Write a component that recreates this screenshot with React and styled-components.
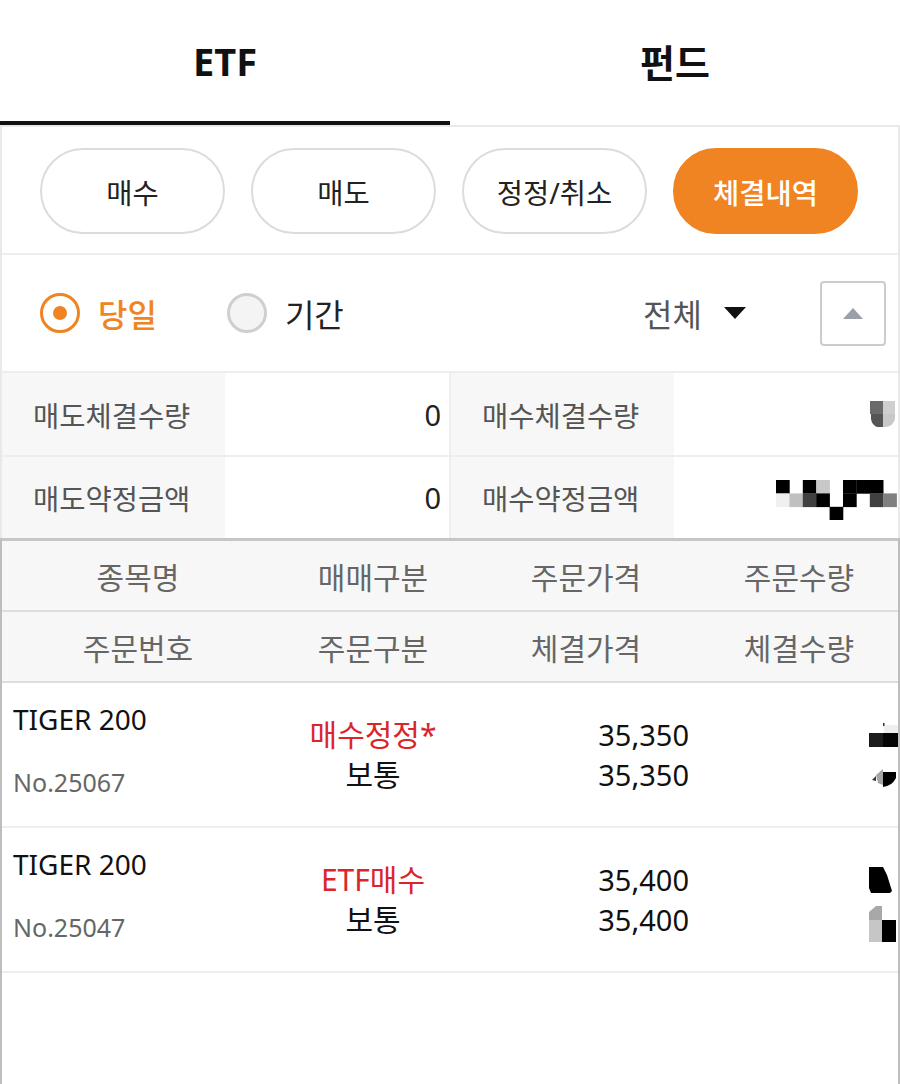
import React from 'react';
import styled, { createGlobalStyle } from 'styled-components';

const ORANGE = '#F08422';
const RED = '#D9262B';

const GlobalStyle = createGlobalStyle`
  html, body {
    margin: 0;
    padding: 0;
    background: #fff;
  }
  body {
    font-family: "Noto Sans", "Noto Sans CJK KR", sans-serif;
    color: #111;
  }
  * {
    box-sizing: border-box;
  }
`;

const Page = styled.div`
  width: 900px;
  min-height: 1084px;
  display: flex;
  flex-direction: column;
  background: #fff;
`;

const TabBar = styled.div`
  display: flex;
`;

const Tab = styled.div`
  flex: 1;
  height: 125px;
  display: flex;
  align-items: center;
  justify-content: center;
  font-size: 38px;
  font-weight: 700;
  color: #111;
  border-bottom: 4px solid ${p => (p.$active ? '#111' : 'transparent')};
`;

const Panel = styled.section`
  border: 2px solid #e9e9e9;
  border-bottom: none;
`;

const ButtonRow = styled.div`
  display: flex;
  gap: 26px;
  padding: 21px 38px 19px;
  border-bottom: 2px solid #eee;
`;

const Pill = styled.button`
  width: 185px;
  height: 86px;
  border-radius: 43px;
  border: 2px solid ${p => (p.$active ? ORANGE : '#dcdcdc')};
  background: ${p => (p.$active ? ORANGE : '#fff')};
  color: ${p => (p.$active ? '#fff' : '#222')};
  font-family: inherit;
  font-size: 28.5px;
  font-weight: ${p => (p.$active ? 500 : 400)};
  padding: 0;
`;

const FilterRow = styled.div`
  height: 118px;
  display: flex;
  align-items: center;
  padding: 0 12px 0 38px;
  border-bottom: 2px solid #eee;
`;

const Radio = styled.label`
  display: flex;
  align-items: center;
  gap: 18px;
  margin-right: 70px;
  font-size: 32px;
  font-weight: ${p => (p.$checked ? 500 : 400)};
  color: ${p => (p.$checked ? ORANGE : '#222')};
`;

const RadioMark = styled.span`
  width: 40px;
  height: 40px;
  border-radius: 50%;
  border: 3px solid ${p => (p.$checked ? ORANGE : '#cfcfcf')};
  background: ${p => (p.$checked ? '#fff' : '#f4f4f4')};
  display: flex;
  align-items: center;
  justify-content: center;

  &::after {
    content: '';
    display: ${p => (p.$checked ? 'block' : 'none')};
    width: 14px;
    height: 14px;
    border-radius: 50%;
    background: ${ORANGE};
  }
`;

const Spacer = styled.div`
  flex: 1;
`;

const Select = styled.div`
  display: flex;
  align-items: center;
  gap: 22px;
  font-size: 32px;
  color: #555;
  margin-right: 74px;
`;

const CaretDown = styled.span`
  width: 0;
  height: 0;
  border-left: 11px solid transparent;
  border-right: 11px solid transparent;
  border-top: 12px solid #111;
`;

const ToggleBox = styled.div`
  width: 66px;
  height: 65px;
  border: 2px solid #c9cdd2;
  border-radius: 4px;
  display: flex;
  align-items: center;
  justify-content: center;
`;

const CaretUp = styled.span`
  width: 0;
  height: 0;
  border-left: 10px solid transparent;
  border-right: 10px solid transparent;
  border-bottom: 11px solid #9aa0a8;
`;

const Summary = styled.div`
  display: grid;
  grid-template-columns: 223px 224px 225px 224px;
`;

const SumLabel = styled.div`
  height: ${p => (p.$last ? 81 : 84)}px;
  display: flex;
  align-items: center;
  padding-left: 31px;
  background: #f7f7f7;
  font-size: 28.5px;
  color: #555;
  border-bottom: ${p => (p.$last ? 'none' : '2px solid #eee')};
  border-left: ${p => (p.$divider ? '2px solid #eee' : 'none')};
`;

const SumValue = styled.div`
  height: ${p => (p.$last ? 81 : 84)}px;
  display: flex;
  align-items: center;
  justify-content: flex-end;
  padding-right: ${p => (p.$flush ? 0 : 8)}px;
  font-size: 29px;
  color: #222;
  border-bottom: ${p => (p.$last ? 'none' : '2px solid #eee')};
`;

const Table = styled.div`
  flex: 1;
  border-left: 2px solid #bdbdbd;
  border-right: 2px solid #bdbdbd;
  border-top: 3px solid #c6c6c6;
`;

const HeadRow = styled.div`
  display: grid;
  grid-template-columns: 272px 198px 228px 198px;
  height: 71px;
  background: #f7f7f7;
  border-bottom: 2px solid #dedede;
`;

const HeadCell = styled.div`
  display: flex;
  align-items: center;
  justify-content: center;
  font-size: 30px;
  color: #666;
`;

const DataRow = styled.div`
  display: grid;
  grid-template-columns: 272px 198px 228px 198px;
  height: 145px;
  border-bottom: 2px solid #eee;
`;

const NameCell = styled.div`
  display: flex;
  flex-direction: column;
  gap: 27px;
  padding: 18px 0 0 11px;
`;

const Name = styled.div`
  font-size: 28px;
  line-height: 36px;
  color: #111;
`;

const OrderNo = styled.div`
  font-size: 25px;
  line-height: 36px;
  color: #666;
`;

const StackCell = styled.div`
  display: flex;
  flex-direction: column;
  justify-content: center;
  align-items: ${p => (p.$right ? 'flex-end' : 'center')};
  padding-right: ${p => (p.$right ? 11 : 0)}px;
  padding-bottom: 2px;
  font-size: ${p => (p.$right ? 29 : 30)}px;
  line-height: 40px;
  color: #111;
`;

const Kind = styled.span`
  color: ${p => (p.$red ? RED : '#111')};
`;

const QtyCell = styled.div`
  display: flex;
  justify-content: flex-end;
`;

const Mosaic = ({ w, h, children }) => (
  <svg width={w} height={h} viewBox={`0 0 ${w} ${h}`} style={{ display: 'block' }}>
    {children}
  </svg>
);

const S = 13.4;
const bigCells = [
  [0, 0, '#000'], [2, 0, '#000'], [3, 0, '#c8c8c8'], [5, 0, '#000'], [6, 0, '#000'], [7, 0, '#000'],
  [0, 1, '#f0f0f0'], [1, 1, '#c0c0c0'], [2, 1, '#404040'], [3, 1, '#000'], [5, 1, '#000'],
  [7, 1, '#404040'], [8, 1, '#808080'],
  [4, 2, '#000'],
];

const rows = [
  { name: 'TIGER 200', no: 'No.25067', kind: '매수정정*', type: '보통', price: '35,350', row: 1 },
  { name: 'TIGER 200', no: 'No.25047', kind: 'ETF매수', type: '보통', price: '35,400', row: 2 },
];

const QtyMosaic = ({ row }) =>
  row === 1 ? (
    <Mosaic w={30} h={145}>
      <rect x="16" y="42" width="14" height="8" fill="#efefef" />
      <rect x="15" y="40" width="1.5" height="3" fill="#333" />
      <rect x="1" y="50" width="15" height="14" fill="#1c1c1c" />
      <rect x="15" y="50" width="15" height="14" fill="#050505" />
      <polygon points="8,92 15,86 15,102 10,100" fill="#a5a5a5" />
      <path d="M15 89 H28 V95 Q24 103 15 104 Z" fill="#000" />
      <polygon points="4,97 8,93 8,98" fill="#333" />
    </Mosaic>
  ) : (
    <Mosaic w={30} h={145}>
      <polygon points="1,39 15,39 19,47 24,63 22,65 3,65 1,60" fill="#000" />
      <polygon points="1,84 8,78 14,78 14,92 1,92" fill="#a8a8a8" />
      <rect x="1" y="92" width="13" height="22" fill="#c6c6c6" />
      <rect x="14" y="92" width="14" height="22" fill="#000" />
    </Mosaic>
  );

export default function App() {
  return (
    <Page>
      <GlobalStyle />
      <TabBar>
        <Tab $active>ETF</Tab>
        <Tab>펀드</Tab>
      </TabBar>

      <Panel>
        <ButtonRow>
          <Pill>매수</Pill>
          <Pill>매도</Pill>
          <Pill>정정/취소</Pill>
          <Pill $active>체결내역</Pill>
        </ButtonRow>

        <FilterRow>
          <Radio $checked>
            <RadioMark $checked />
            당일
          </Radio>
          <Radio>
            <RadioMark />
            기간
          </Radio>
          <Spacer />
          <Select>
            전체
            <CaretDown />
          </Select>
          <ToggleBox>
            <CaretUp />
          </ToggleBox>
        </FilterRow>

        <Summary>
          <SumLabel>매도체결수량</SumLabel>
          <SumValue>0</SumValue>
          <SumLabel $divider>매수체결수량</SumLabel>
          <SumValue $flush>
            <Mosaic w={28} h={26}>
              <rect x="0" y="0" width="13" height="13" fill="#6a6a6a" />
              <rect x="13" y="0" width="12" height="13" fill="#cfcfcf" />
              <path d="M1 13 H13 V26 H7 Q2 24 1 18 Z" fill="#555" />
              <path d="M13 13 H25 V18 Q23 25 16 26 H13 Z" fill="#c8c8c8" />
            </Mosaic>
          </SumValue>
          <SumLabel $last>매도약정금액</SumLabel>
          <SumValue $last>0</SumValue>
          <SumLabel $last $divider>매수약정금액</SumLabel>
          <SumValue $last $flush>
            <Mosaic w={122} h={44}>
              {bigCells.map(([c, r, f]) => (
                <rect key={`${c}-${r}`} x={c * S} y={r * S + 4} width={S + 0.3} height={S + 0.3} fill={f} />
              ))}
            </Mosaic>
          </SumValue>
        </Summary>
      </Panel>

      <Table>
        <HeadRow>
          <HeadCell>종목명</HeadCell>
          <HeadCell>매매구분</HeadCell>
          <HeadCell>주문가격</HeadCell>
          <HeadCell>주문수량</HeadCell>
        </HeadRow>
        <HeadRow>
          <HeadCell>주문번호</HeadCell>
          <HeadCell>주문구분</HeadCell>
          <HeadCell>체결가격</HeadCell>
          <HeadCell>체결수량</HeadCell>
        </HeadRow>
        {rows.map(r => (
          <DataRow key={r.no}>
            <NameCell>
              <Name>{r.name}</Name>
              <OrderNo>{r.no}</OrderNo>
            </NameCell>
            <StackCell>
              <Kind $red>{r.kind}</Kind>
              <Kind>{r.type}</Kind>
            </StackCell>
            <StackCell $right>
              <span>{r.price}</span>
              <span>{r.price}</span>
            </StackCell>
            <QtyCell>
              <QtyMosaic row={r.row} />
            </QtyCell>
          </DataRow>
        ))}
      </Table>
    </Page>
  );
}
